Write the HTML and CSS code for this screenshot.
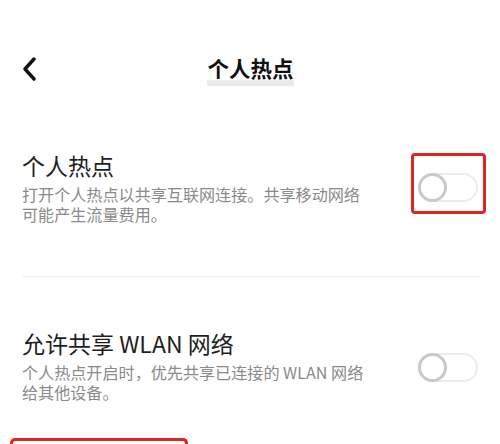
FILE: index.html
```html
<!DOCTYPE html>
<html lang="zh-CN">
<head>
<meta charset="utf-8">
<title>个人热点</title>
<link rel="stylesheet" href="styles.css">
</head>
<body>
<div class="screen">
  <header class="topbar">
    <button class="back" aria-label="返回">
      <svg width="16" height="24" viewBox="0 0 16 24"><path d="M12 2 L3 12 L12 22" fill="none" stroke="#111" stroke-width="3.4" stroke-linecap="round" stroke-linejoin="round"/></svg>
    </button>
    <h1 class="title"><span class="title-text">个人热点</span></h1>
  </header>

  <section class="row first">
    <div class="text">
      <div class="label">个人热点</div>
      <div class="desc">打开个人热点以共享互联网连接。共享移动网络<br>可能产生流量费用。</div>
    </div>
    <div class="mark">
      <span class="switch"><span class="knob"></span></span>
    </div>
  </section>

  <hr class="divider">

  <section class="row second">
    <div class="text">
      <div class="label">允许共享 WLAN 网络</div>
      <div class="desc">个人热点开启时，优先共享已连接的 WLAN 网络<br>给其他设备。</div>
    </div>
    <div class="plain">
      <span class="switch"><span class="knob"></span></span>
    </div>
  </section>

  <div class="next-mark"></div>
</div>
</body>
</html>
```
FILE: styles.css
```css
* { box-sizing: border-box; }
html, body { margin: 0; padding: 0; background: #fff; }
body {
  font-family: "Noto Sans CJK SC", "Noto Sans", sans-serif;
  color: #1c1c1c;
  width: 500px;
  height: 444px;
  overflow: hidden;
}
.screen { padding: 0 14px 0 22px; }

.topbar {
  position: relative;
  height: 150px;
  padding-top: 55px;
  display: flex;
  justify-content: center;
}
.back {
  position: absolute;
  left: 0;
  top: 57px;
  border: 0;
  background: none;
  padding: 0;
  width: 16px;
  height: 24px;
}
.title {
  margin: 0 0 0 -7px;
  font-size: 21.5px;
  font-weight: 700;
  line-height: 26px;
  height: 32px;
  color: #111;
}
.title-text {
  display: inline-block;
  height: 32px;
  background: linear-gradient(to bottom, transparent 25px, #ececec 25px, #ececec 31px, transparent 31px);
}

.row {
  display: flex;
  align-items: flex-start;
  justify-content: space-between;
}
.text { display: flex; flex-direction: column; }
.label {
  font-size: 23px;
  line-height: 30px;
  color: #1e1e1e;
}
.desc {
  margin-top: 5px;
  font-size: 16.1px;
  line-height: 19.5px;
  color: #8a8a8a;
}

.mark {
  border: 3.5px solid #e0251f;
  border-radius: 4px;
  width: 75px;
  height: 61px;
  margin-top: 3px;
  padding: 16.5px 0 0 3.5px;
}
.plain {
  width: 75px;
  margin-top: 24.5px;
  padding-left: 7px;
}
.switch {
  width: 60px;
  height: 29px;
  border-radius: 15px;
  border: 2px solid #ececec;
  display: flex;
  align-items: center;
}
.knob {
  flex: none;
  width: 29px;
  height: 29px;
  margin-left: -2px;
  border-radius: 50%;
  border: 3.5px solid #c9c9c9;
  background: #fff;
}

.divider {
  border: 0;
  border-top: 1.5px solid #f0f0f0;
  margin: 52px 6px 0 0;
}

.second { margin-top: 51px; }

.next-mark {
  margin: 36px 0 0 -12px;
  width: 178px;
  height: 20px;
  border: 3.5px solid #e0251f;
  border-bottom: 0;
  border-radius: 5px 5px 0 0;
}
```
